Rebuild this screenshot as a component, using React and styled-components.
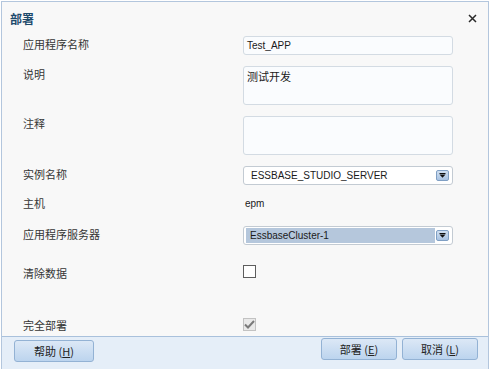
import styled, { createGlobalStyle } from "styled-components";

const Global = createGlobalStyle`
  html, body {
    margin: 0;
    padding: 0;
    background: #ffffff;
    width: 490px;
    height: 369px;
    overflow: hidden;
  }
  body {
    font-family: "Liberation Sans", "Noto Sans CJK SC", sans-serif;
  }
`;

const Dialog = styled.div`
  margin: 1px 0 0 1px;
  width: 488px;
  height: 380px;
  box-sizing: border-box;
  border: 1px solid #b3c6dd;
  background: #f8f8f8;
  display: flex;
  flex-direction: column;
`;

const Header = styled.div`
  height: 34px;
  box-sizing: border-box;
  padding: 8px 10px 0 8px;
  display: flex;
  justify-content: space-between;
  align-items: flex-start;
`;

const Title = styled.div`
  font-family: "Noto Sans CJK SC", sans-serif;
  font-size: 12px;
  font-weight: 700;
  line-height: 17px;
  color: #1d4a6c;
`;

const Close = styled.button`
  border: none;
  background: none;
  padding: 0;
  margin-top: 4px;
  width: 10px;
  height: 10px;
  display: flex;
  cursor: pointer;
`;

const Form = styled.div`
  display: flex;
  flex-direction: column;
  padding-left: 21px;
`;

const Row = styled.div`
  display: flex;
  align-items: flex-start;
  height: ${(p) => p.$h}px;
`;

const Label = styled.div`
  width: 220px;
  flex: none;
  font-family: "Noto Sans CJK SC", sans-serif;
  font-size: 11px;
  line-height: 15px;
  color: #353535;
  margin-top: ${(p) => p.$top || 0}px;
`;

const TextBox = styled.div`
  width: 210px;
  height: ${(p) => p.$h || 19}px;
  box-sizing: border-box;
  border: 1px solid #d3dbe3;
  border-radius: 3px;
  background: #fafcfe;
  padding: ${(p) => (p.$multi ? "2px 3px" : "0 3px")};
  font-family: ${(p) => (p.$cjk ? '"Noto Sans CJK SC", sans-serif' : "inherit")};
  font-size: ${(p) => (p.$cjk ? 11 : 10)}px;
  line-height: ${(p) => (p.$multi ? "14px" : "17px")};
  color: #1a1a1a;
`;

const Select = styled.div`
  width: 210px;
  height: 19px;
  box-sizing: border-box;
  border: 1px solid #c3cbd3;
  border-radius: 3px;
  background: #ffffff;
  display: flex;
  align-items: center;
  padding: 0 2px;
  gap: 1px;
`;

const SelectValue = styled.div`
  flex: 1;
  height: 15px;
  padding-left: ${(p) => (p.$selected ? 4 : 5)}px;
  background: ${(p) => (p.$selected ? "#b5c7dc" : "transparent")};
  font-size: 10px;
  line-height: 15px;
  color: #1a1a1a;
`;

const Arrow = styled.div`
  width: 13px;
  height: 11px;
  box-sizing: border-box;
  border: 1px solid #7f9fc4;
  border-radius: 2px;
  background: linear-gradient(#cfdff1, #a9c3e2);
  display: flex;
  align-items: center;
  justify-content: center;
  margin-right: 1px;
`;

const Plain = styled.div`
  font-size: 10px;
  line-height: 15px;
  color: #1a1a1a;
  margin-left: 2px;
`;

const Check = styled.div`
  width: 13px;
  height: 13px;
  box-sizing: border-box;
  border: 1px solid ${(p) => (p.$disabled ? "#c2c2c2" : "#5e5e5e")};
  background: ${(p) => (p.$disabled ? "#e9e9e9" : "#ffffff")};
  display: flex;
  align-items: center;
  justify-content: center;
`;

const Footer = styled.div`
  margin-top: 5px;
  flex: 1;
  border-top: 1px solid #a9c1dc;
  background: #e5eef8;
  display: flex;
  align-items: flex-start;
  padding: 0 10px 0 12px;
`;

const Spacer = styled.div`
  flex: 1;
`;

const Button = styled.button`
  width: ${(p) => p.$w}px;
  height: 22px;
  margin-top: ${(p) => p.$top}px;
  margin-left: ${(p) => p.$left || 0}px;
  box-sizing: border-box;
  border: 1px solid #93b2d4;
  border-radius: 3px;
  background: linear-gradient(#dce8f6, #bcd4ee);
  font-family: "Noto Sans CJK SC", sans-serif;
  font-size: 11px;
  color: #222;
  padding: 0;
  u {
    text-decoration: underline;
  }
`;

const ArrowIcon = () => (
  <svg width="7" height="5" viewBox="0 0 7 5">
    <rect x="0.5" y="0" width="6" height="1" fill="#111" />
    <polygon points="0.5,1.5 6.5,1.5 3.5,4.8" fill="#111" />
  </svg>
);

export default function App() {
  return (
    <>
      <Global />
      <Dialog>
        <Header>
          <Title>部署</Title>
          <Close aria-label="close">
            <svg width="9" height="9" viewBox="0 0 9 9">
              <path d="M1 1L8 8M8 1L1 8" stroke="#2a2a2a" strokeWidth="1.5" />
            </svg>
          </Close>
        </Header>
        <Form>
          <Row $h={30}>
            <Label $top={1}>应用程序名称</Label>
            <TextBox>Test_APP</TextBox>
          </Row>
          <Row $h={50}>
            <Label $top={1}>说明</Label>
            <TextBox $h={39} $multi $cjk>
              测试开发
            </TextBox>
          </Row>
          <Row $h={50}>
            <Label>注释</Label>
            <TextBox $h={39} $multi />
          </Row>
          <Row $h={30}>
            <Label $top={1}>实例名称</Label>
            <Select>
              <SelectValue>ESSBASE_STUDIO_SERVER</SelectValue>
              <Arrow>
                <ArrowIcon />
              </Arrow>
            </Select>
          </Row>
          <Row $h={30}>
            <Label>主机</Label>
            <Plain>epm</Plain>
          </Row>
          <Row $h={39}>
            <Label $top={1}>应用程序服务器</Label>
            <Select>
              <SelectValue $selected>EssbaseCluster-1</SelectValue>
              <Arrow>
                <ArrowIcon />
              </Arrow>
            </Select>
          </Row>
          <Row $h={53}>
            <Label $top={1}>清除数据</Label>
            <Check />
          </Row>
          <Row $h={13}>
            <Label $top={0}>完全部署</Label>
            <Check $disabled>
              <svg width="11" height="9" viewBox="0 0 11 9">
                <path d="M1 4.5L4 7.5L10 1" fill="none" stroke="#7a7a7a" strokeWidth="2" />
              </svg>
            </Check>
          </Row>
        </Form>
        <Footer>
          <Button $w={80} $top={3}>
            帮助 (<u>H</u>)
          </Button>
          <Spacer />
          <Button $w={76} $top={1}>
            部署 (<u>E</u>)
          </Button>
          <Button $w={76} $top={1} $left={5}>
            取消 (<u>L</u>)
          </Button>
        </Footer>
      </Dialog>
    </>
  );
}
